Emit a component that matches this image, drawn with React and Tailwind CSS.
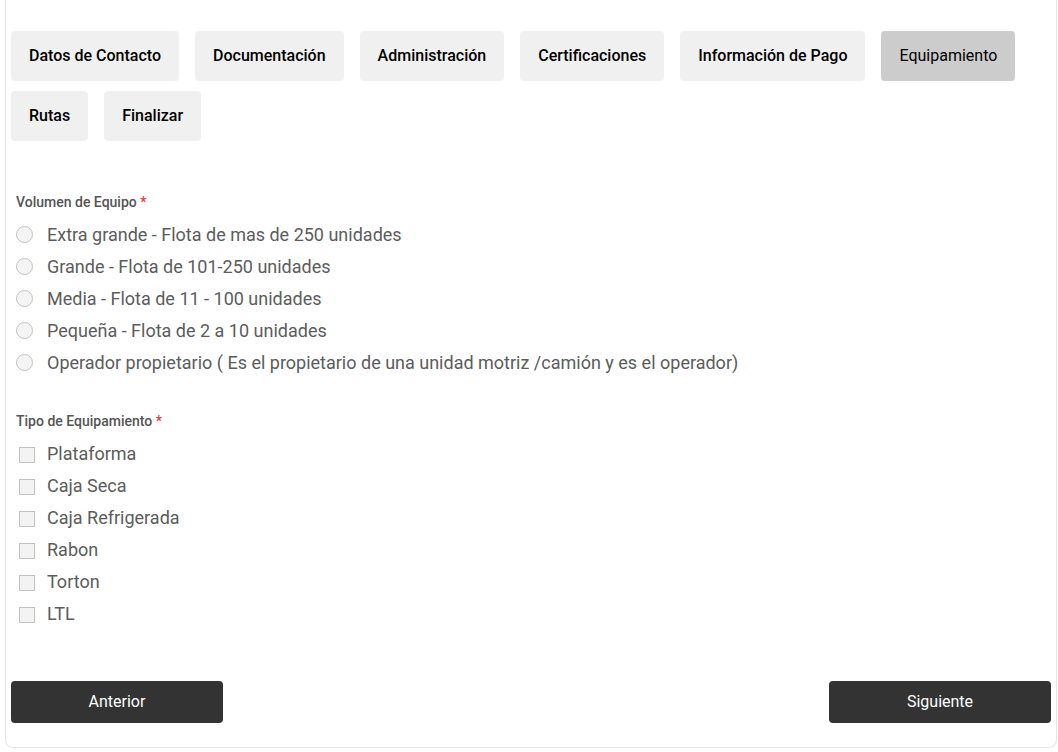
import { useState } from 'react';

const TABS = [
  'Datos de Contacto',
  'Documentación',
  'Administración',
  'Certificaciones',
  'Información de Pago',
  'Equipamiento',
  'Rutas',
  'Finalizar',
];

const VOLUMENES = [
  'Extra grande - Flota de mas de 250 unidades',
  'Grande - Flota de 101-250 unidades',
  'Media - Flota de 11 - 100 unidades',
  'Pequeña - Flota de 2 a 10 unidades',
  'Operador propietario ( Es el propietario de una unidad motriz /camión y es el operador)',
];

const EQUIPOS = ['Plataforma', 'Caja Seca', 'Caja Refrigerada', 'Rabon', 'Torton', 'LTL'];

const FieldLabel = ({ children }) => (
  <p className="h-5 text-[14px] leading-5 font-medium text-[#555]">
    {children} <span className="text-[#e53935]">*</span>
  </p>
);

export default function App() {
  const [active, setActive] = useState('Equipamiento');
  const [volumen, setVolumen] = useState('');
  const [equipos, setEquipos] = useState([]);

  const toggleEquipo = (name) => {
    setEquipos((current) =>
      current.includes(name) ? current.filter((e) => e !== name) : [...current, name]
    );
  };

  return (
    <div className="min-h-[752px] bg-white pl-[5px] pr-px font-['Roboto',sans-serif]">
      <div className="rounded-b-lg border-x border-b border-[#e6e6e6] px-[5px] pt-[31px] pb-[24px]">
        <div className="flex flex-wrap gap-x-[16px] gap-y-[10px]">
          {TABS.map((tab) => (
            <button
              key={tab}
              onClick={() => setActive(tab)}
              className={`h-[50px] rounded px-[18px] text-[16px] text-black ${
                active === tab ? 'bg-[#cccccc] font-normal' : 'bg-[#f0f0f0] font-medium'
              }`}
            >
              {tab}
            </button>
          ))}
        </div>

        <div className="mt-[51px] pl-[5px]">
          <FieldLabel>Volumen de Equipo</FieldLabel>
          <div className="mt-[6px]">
            {VOLUMENES.map((v) => (
              <label key={v} className="flex h-8 cursor-pointer items-center gap-[14px]">
                <span
                  onClick={() => setVolumen(v)}
                  className="flex h-[17px] w-[17px] shrink-0 items-center justify-center rounded-full border-[1.5px] border-[#c2c2c2] bg-[#f4f4f4]"
                >
                  {volumen === v && <span className="h-2 w-2 rounded-full bg-[#333]" />}
                </span>
                <span className="text-[18px] text-[#5c5c5c]">{v}</span>
              </label>
            ))}
          </div>

          <div className="mt-[33px]">
            <FieldLabel>Tipo de Equipamiento</FieldLabel>
          </div>
          <div className="mt-[6px]">
            {EQUIPOS.map((e) => (
              <label
                key={e}
                onClick={() => toggleEquipo(e)}
                className="flex h-8 cursor-pointer items-center gap-[12px] pl-[3px]"
              >
                <span className="mt-[3px] flex h-4 w-4 shrink-0 items-center justify-center border border-[#c2c2c2] bg-[#f3f3f3] text-[11px] leading-none text-[#333]">
                  {equipos.includes(e) ? '✓' : ''}
                </span>
                <span className="text-[18px] text-[#5c5c5c]">{e}</span>
              </label>
            ))}
          </div>
        </div>

        <div className="mt-[52px] flex justify-between">
          <button className="h-[42px] w-[212px] rounded bg-[#333] text-[16px] text-white">
            Anterior
          </button>
          <button className="h-[42px] w-[222px] rounded bg-[#333] text-[16px] text-white">
            Siguiente
          </button>
        </div>
      </div>
    </div>
  );
}
